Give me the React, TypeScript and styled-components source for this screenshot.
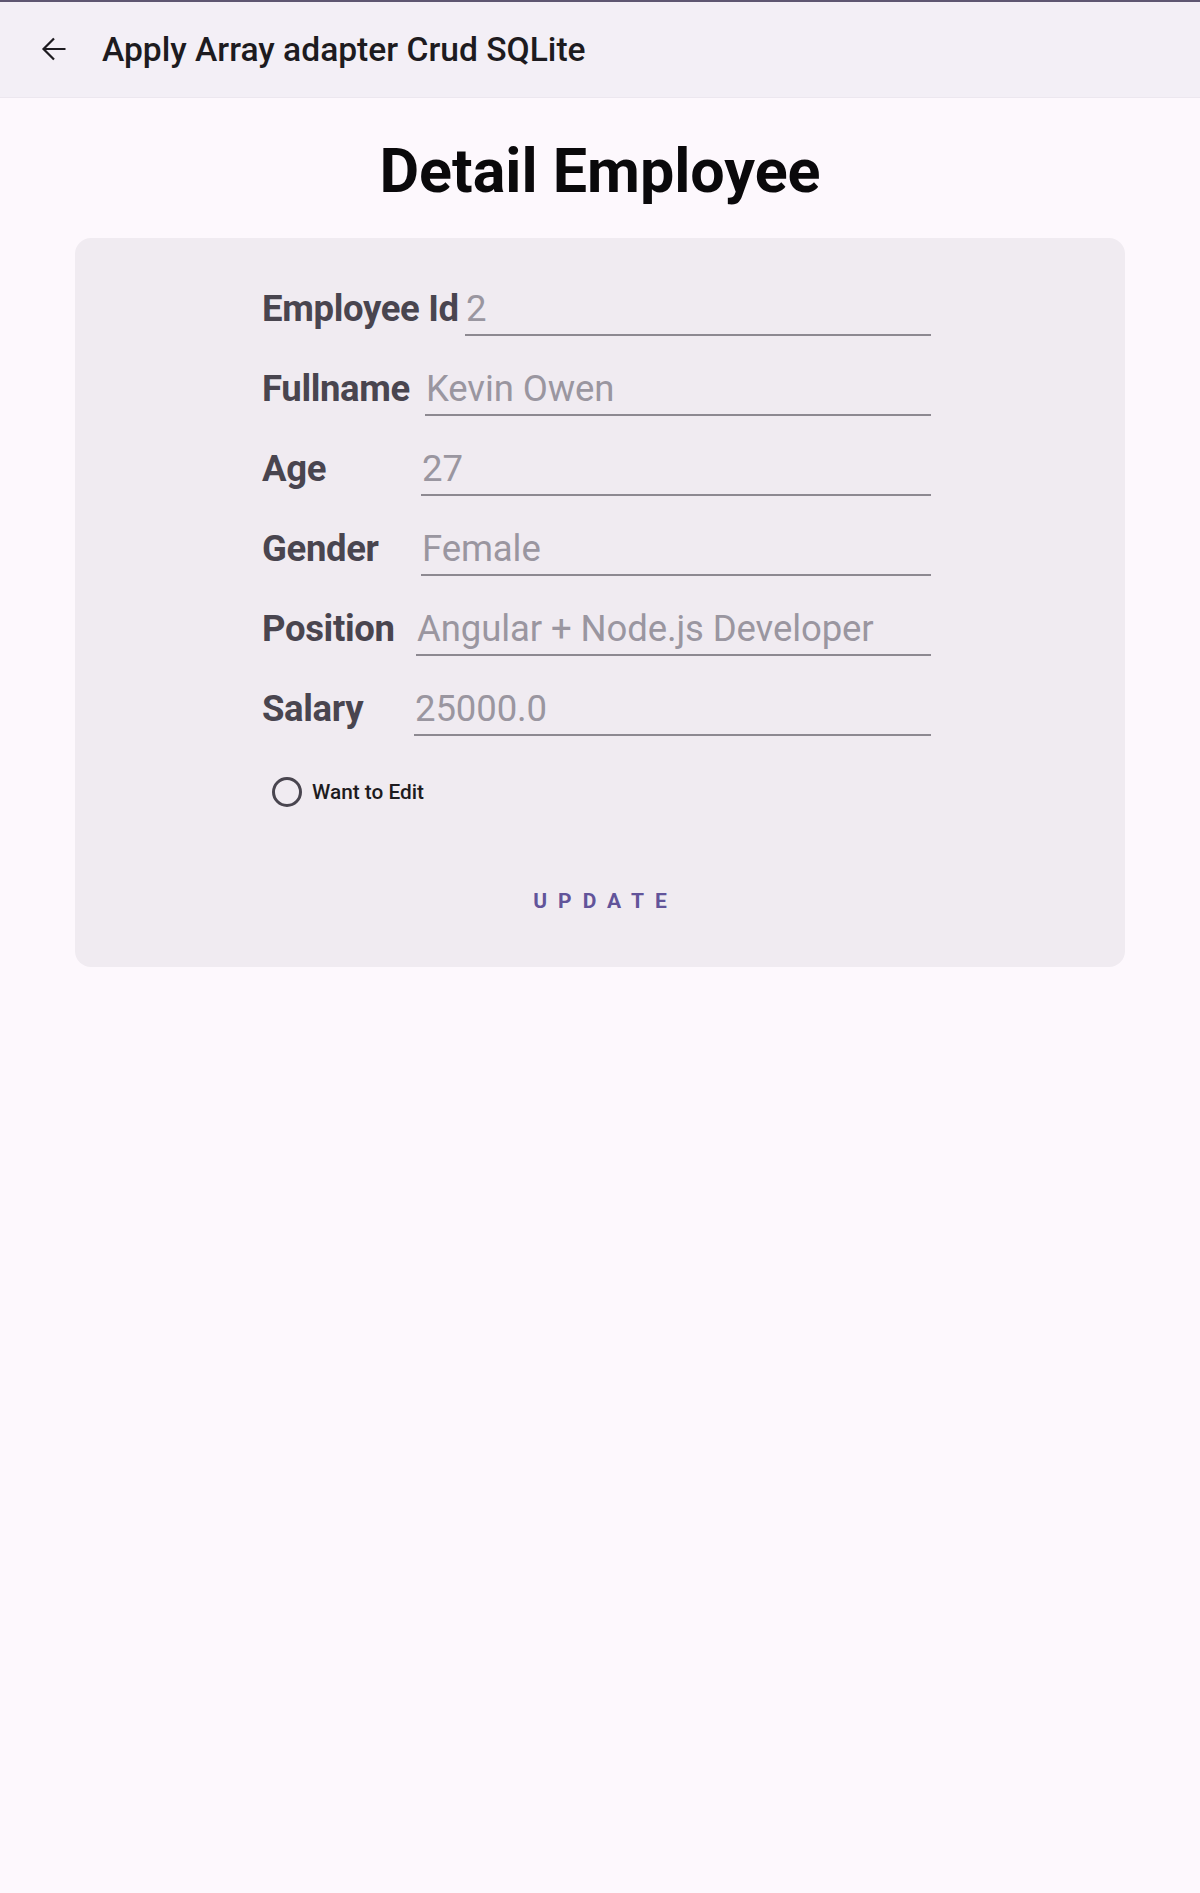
import React from "react";
import styled, { createGlobalStyle } from "styled-components";

const GlobalStyle = createGlobalStyle`
  html, body {
    margin: 0;
    padding: 0;
    background: #fdf8fd;
  }
  body {
    font-family: Roboto, "Noto Sans", "Liberation Sans", sans-serif;
  }
  * { box-sizing: border-box; }
`;

const Page = styled.div`
  min-height: 1893px;
  background: #fdf8fd;
  display: flex;
  flex-direction: column;
`;

const TopBar = styled.header`
  height: 98px;
  background: #f3eff6;
  border-top: 2px solid #5e5671;
  border-bottom: 1px solid #ece7ef;
  display: flex;
  align-items: center;
  padding-left: 36px;
`;

const NavButton = styled.button`
  width: 36px;
  height: 36px;
  padding: 0;
  border: none;
  background: transparent;
  display: flex;
  align-items: center;
  justify-content: center;
  margin-right: 30px;
  margin-top: -2px;
  cursor: pointer;
`;

const BarTitle = styled.h1`
  margin: 0;
  font-family: Roboto, sans-serif;
  font-size: 33.6px;
  font-weight: 500;
  color: #1d1b20;
  letter-spacing: 0;
  margin-top: -1px;
`;

const Heading = styled.h2`
  margin: 37px 0 0;
  text-align: center;
  font-family: Roboto, sans-serif;
  font-size: 61px;
  line-height: 72px;
  font-weight: 700;
  color: #0a090b;
`;

const Card = styled.section`
  margin: 31px 75px 0;
  background: #f0ebf1;
  border-radius: 16px;
  padding: 49px 0 42px;
  display: flex;
  flex-direction: column;
`;

const Form = styled.div`
  width: 669px;
  margin-left: 187px;
  display: flex;
  flex-direction: column;
  gap: 31px;
`;

const Row = styled.div`
  display: flex;
  align-items: baseline;
`;

const Label = styled.span<{ $width: number }>`
  flex: 0 0 ${(p) => p.$width}px;
  white-space: nowrap;
  font-family: Roboto, sans-serif;
  font-size: 36.5px;
  line-height: 44px;
  font-weight: 700;
  letter-spacing: -0.35px;
  color: #49454f;
`;

const Field = styled.div`
  flex: 1;
  font-family: Roboto, sans-serif;
  font-size: 36.5px;
  line-height: 44px;
  font-weight: 400;
  letter-spacing: -0.1px;
  color: #9a96a0;
  padding: 0 0 3px 1px;
  border-bottom: 2px solid #8d8991;
  white-space: nowrap;
`;

const RadioRow = styled.label`
  margin-top: 32px;
  height: 48px;
  display: flex;
  align-items: center;
  padding-left: 10px;
  gap: 10px;
  cursor: pointer;
`;

const RadioRing = styled.span`
  width: 30px;
  height: 30px;
  border-radius: 50%;
  border: 3px solid #49454f;
  display: inline-block;
`;

const RadioText = styled.span`
  font-family: Roboto, sans-serif;
  font-size: 20.8px;
  font-weight: 500;
  color: #1d1b20;
`;

const ActionButton = styled.button`
  align-self: center;
  margin-top: 61px;
  border: none;
  background: transparent;
  font-family: Roboto, sans-serif;
  font-size: 21px;
  line-height: 48px;
  font-weight: 700;
  letter-spacing: 11px;
  padding: 0 0 0 11px;
  color: #62549a;
  cursor: pointer;
`;

const ArrowIcon = () => (
  <svg width="36" height="36" viewBox="0 0 36 36" fill="none">
    <path
      d="M29.5 18H7.5M18 7.5L7.5 18L18 28.5"
      stroke="#1d1b20"
      strokeWidth="2.2"
      strokeLinecap="butt"
      strokeLinejoin="miter"
    />
  </svg>
);

const rows: { label: string; value: string; start: number }[] = [
  { label: "Employee Id", value: "2", start: 203 },
  { label: "Fullname", value: "Kevin Owen", start: 163 },
  { label: "Age", value: "27", start: 159 },
  { label: "Gender", value: "Female", start: 159 },
  { label: "Position", value: "Angular + Node.js Developer", start: 154 },
  { label: "Salary", value: "25000.0", start: 152 },
];

export default function App() {
  return (
    <>
      <GlobalStyle />
      <Page>
        <TopBar>
          <NavButton aria-label="Back">
            <ArrowIcon />
          </NavButton>
          <BarTitle>Apply Array adapter Crud SQLite</BarTitle>
        </TopBar>
        <Heading>Detail Employee</Heading>
        <Card>
          <Form>
            {rows.map((r) => (
              <Row key={r.label}>
                <Label $width={r.start}>{r.label}</Label>
                <Field>{r.value}</Field>
              </Row>
            ))}
          </Form>
          <Form>
            <RadioRow>
              <RadioRing />
              <RadioText>Want to Edit</RadioText>
            </RadioRow>
          </Form>
          <ActionButton>UPDATE</ActionButton>
        </Card>
      </Page>
    </>
  );
}
